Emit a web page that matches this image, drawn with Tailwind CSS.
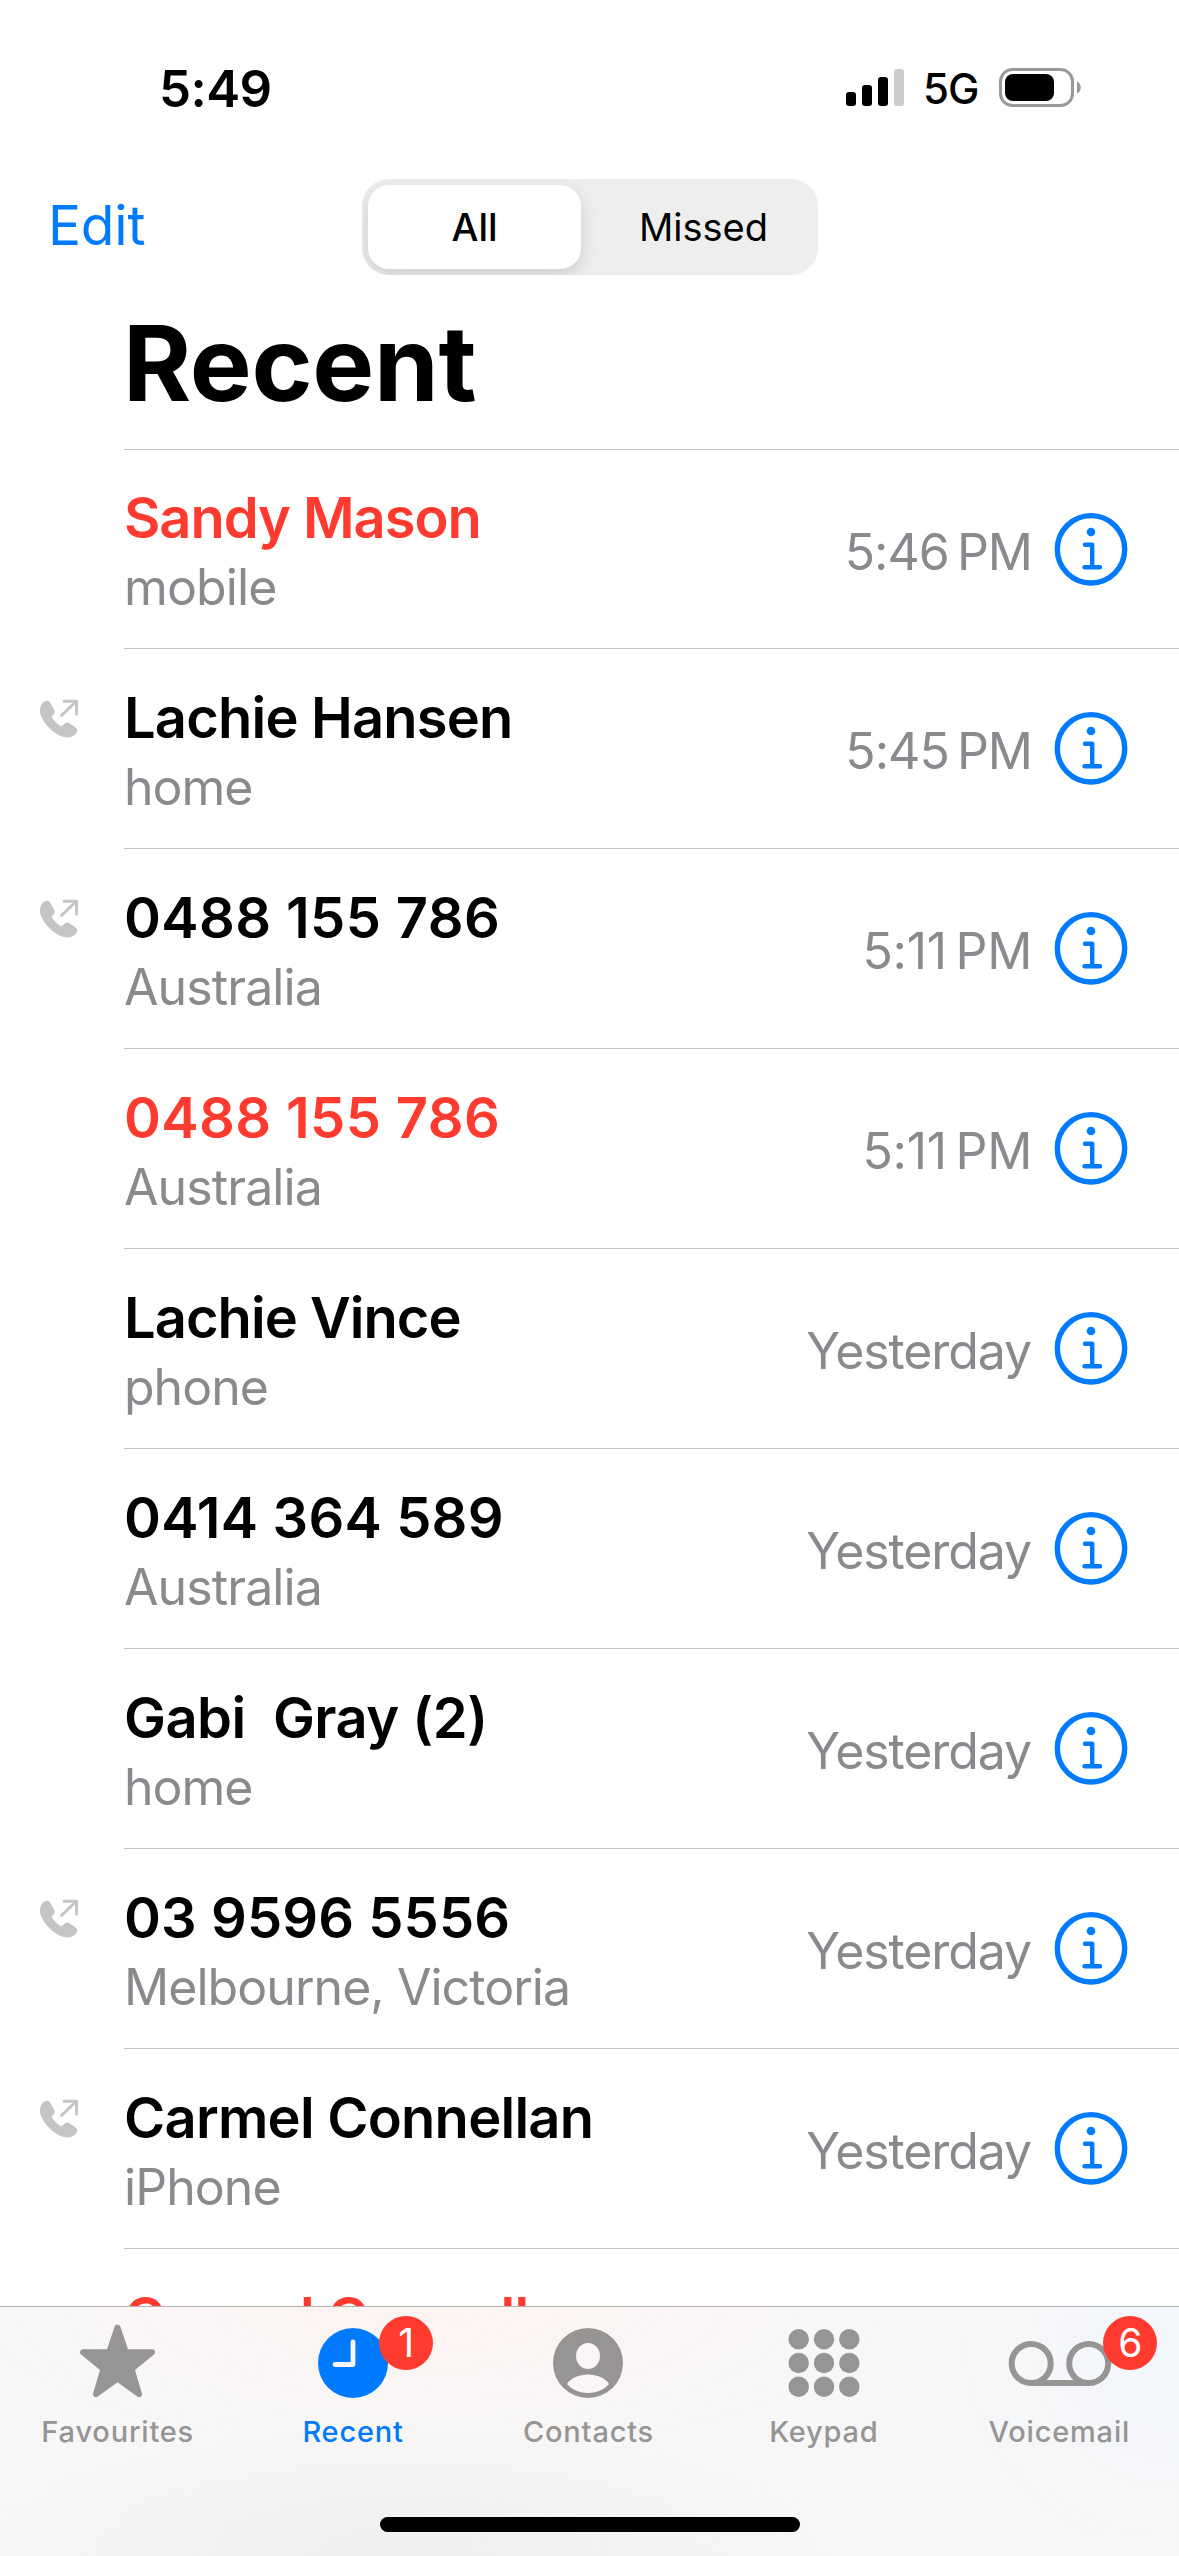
<!DOCTYPE html>
<html lang="en">
<head>
    <meta charset="utf-8">
    <title>Recent</title>
    <script src="https://cdn.jsdelivr.net/npm/@tailwindcss/browser@4"></script>
</head>
<body class="bg-white">
    <div class="relative flex h-[2556px] w-[1179px] flex-col overflow-hidden bg-white font-[Inter,sans-serif] text-black">
        <!-- status bar -->
        <div class="flex h-[176px] shrink-0 items-start justify-between pl-[159px] pr-[98px]">
            <span class="mt-[57px] text-[51px] leading-[64px] font-semibold tracking-[-0.6px]">5:49</span>
            <div class="mt-[66px] flex h-[44px] items-center">
                <svg class="h-[44px] w-[58px]" viewBox="0 0 58 44">
                    <rect x="0" y="26" width="10" height="14" rx="3"/>
                    <rect x="16" y="19" width="10" height="21" rx="3"/>
                    <rect x="32" y="11" width="10" height="29" rx="3"/>
                    <rect x="48" y="3" width="10" height="37" rx="3" fill="#ccc"/>
                </svg>
                <span class="ml-[19px] w-[76px] pt-[2px] text-[42px] leading-[44px] font-medium tracking-[-1px]">5G</span>
                <svg class="h-[44px] w-[82px]" viewBox="0 0 82 44">
                    <rect x="1.5" y="3.5" width="72" height="36" rx="12" fill="none" stroke="#999" stroke-width="3"/>
                    <rect x="6" y="8" width="49" height="27" rx="8"/>
                    <path d="M78 15.500c5 2 5 10 0 12z" fill="#999"/>
                </svg>
            </div>
        </div>

        <!-- nav -->
        <div class="grid h-[102px] shrink-0 grid-cols-[362px_456px_361px] items-start">
            <a class="pl-[48px] pt-[15px] text-[55px] leading-[68px] tracking-[-0.2px] text-[#007aff]">Edit</a>
            <div class="mt-[3px] flex h-[96px] overflow-hidden rounded-[27px] bg-[#eee] p-[6px] text-[38px] leading-[84px]">
                <div class="w-[213px] rounded-[21px] bg-white text-center font-medium shadow-[0_6px_18px_rgba(0,0,0,0.14)]">All</div>
                <div class="flex-1 pl-[14px] text-center">Missed</div>
            </div>
        </div>

        <h1 class="h-[171px] shrink-0 pl-[123px] pt-[22px] text-[104px] leading-[126px] font-bold tracking-[-0.3px]">Recent</h1>

        <div id="calls"></div>

        <!-- tab bar -->
        <div class="absolute inset-x-0 bottom-0 h-[250px] border-t border-[#b2b2b2] bg-[#f7f7f7]">
            <div class="h-full bg-[radial-gradient(ellipse_480px_150px_at_430px_0px,#fdf4f2,transparent),radial-gradient(ellipse_260px_250px_at_1179px_40px,#f2f6fb,transparent),radial-gradient(ellipse_450px_130px_at_400px_249px,#efefef,transparent)]">
                <div id="tabs" class="grid h-[210px] grid-cols-5 pr-[2px]"></div>
                <div class="mx-auto h-[15px] w-[420px] rounded-full bg-black"></div>
            </div>
        </div>
    </div>

    <script>
        // name, label, time, missed, outgoing, letter spacing of each of the three texts
        const calls = [
            ['Sandy Mason', 'mobile', '5:46\u2009PM', true, false, -1.05, -0.85, -1],
            ['Lachie Hansen', 'home', '5:45\u2009PM', false, true, -0.8, -1, -1],
            ['0488 155 786', 'Australia', '5:11\u2009PM', false, true, 0.4, -0.9, -0.3],
            ['0488 155 786', 'Australia', '5:11\u2009PM', true, false, 0.4, -0.9, -0.3],
            ['Lachie Vince', 'phone', 'Yesterday', false, false, -0.95, -1, -1.1],
            ['0414 364 589', 'Australia', 'Yesterday', false, false, 0.2, -0.9, -1.1],
            ['Gabi  Gray (2)', 'home', 'Yesterday', false, false, -0.5, -1, -1.1],
            ['03 9596 5556', 'Melbourne, Victoria', 'Yesterday', false, true, 0.1, -0.95, -1.1],
            ['Carmel Connellan', 'iPhone', 'Yesterday', false, true, -0.75, -0.95, -1.1],
            ['Carmel Connellan', '', '', true, false, -0.75, 0, 0],
        ];

        const outgoingIcon = `
            <svg class="mt-[51px] ml-[39px] h-[42px] w-[42px]" viewBox="0 0 42 42" fill="#c5c5c7">
                <path d="M6.500 2C3.500 3 1 7 1 11.500C1 23 17 38.500 28.500 38.500C33 38.500 36.500 36 38 33C38.800 31 38 29.500 36 28L30.500 24.300C28.500 23.200 27 23.300 25.500 24.800L23.500 26.500C22.500 27.300 21.500 27 20 26C17.500 24.300 15 21.500 13.500 19.500C12.800 18.500 12.800 17.500 13.500 16.800L15 15C16 13.500 16 12 15 10.300L11.500 4C10 1.800 8.500 1.300 6.500 2Z"/>
                <path d="M22.500 16.500L37 2.500M25 2.200H37.500V15" fill="none" stroke="#c5c5c7" stroke-width="3" stroke-linecap="round" stroke-linejoin="round"/>
            </svg>`;

        document.getElementById('calls').innerHTML = calls
            .map(([name, label, time, missed, outgoing, t1, t2, t3], i) => `
                <div class="flex ${i === 0 ? 'h-[199px]' : 'h-[200px]'}">
                    <div class="w-[124px] shrink-0">${outgoing ? outgoingIcon : ''}</div>
                    <div class="flex flex-1 border-t border-[#c6c6c8] pr-[51px]">
                        <div class="flex-1 ${i === 0 ? 'pt-[32px]' : 'pt-[33px]'}">
                            <div class="text-[56px] leading-[72px] font-semibold whitespace-pre ${missed ? 'text-[#ff3b30]' : 'text-black'}" style="letter-spacing:${t1}px">${name}</div>
                            <div class="text-[50px] leading-[66px] whitespace-pre text-[#8a8a8e]" style="letter-spacing:${t2}px">${label}</div>
                        </div>
                        <div class="pt-[70px] text-[50px] leading-[64px] whitespace-pre text-[#8a8a8e] ${time === 'Yesterday' ? 'pr-px' : ''}" style="letter-spacing:${t3}px">${time}</div>
                        <svg class="mt-[62px] ml-[22px] h-[74px] w-[74px]" viewBox="0 0 74 74" fill="none" stroke="#007aff" stroke-linecap="round" stroke-linejoin="round">
                            <circle cx="37" cy="37.300" r="33.700" stroke-width="5.400"/>
                            <circle cx="37" cy="20" r="4.300" fill="#007aff" stroke="none"/>
                            <path d="M31 32.800H38.200V55.300M30.500 55.300H46" stroke-width="4.400"/>
                        </svg>
                    </div>
                </div>`)
            .join('');

        const tabs = [
            ['Favourites', '', `<path d="M38.500 3.500L46.800 28.300H73L52.600 45L60 70L38.500 54.500L17 70L24.400 45L4 28.300H30.200Z" stroke="currentColor" stroke-width="6" stroke-linejoin="round"/>`],
            ['Recent', '1', `<circle cx="39" cy="39" r="35"/><path d="M39 18V40.500H21" fill="none" stroke="#f9f5f5" stroke-width="4.800" stroke-linecap="round" stroke-linejoin="round"/>`],
            ['Contacts', '', `<circle cx="39" cy="39" r="35"/><ellipse cx="39" cy="32" rx="12" ry="13" fill="#f9f6f5"/><path d="M18 60C22 54 30 50.500 39 50.500S56 54 60 60C55 66 47 69 39 69S23 66 18 60Z" fill="#f9f6f5"/>`],
            ['Keypad', '', [15.2, 39, 62.8].map(y => [13.7, 39, 64.3].map(x => `<circle cx="${x}" cy="${y}" r="10.200"/>`).join('')).join('')],
            ['Voicemail', '6', `<g fill="none" stroke="currentColor" stroke-width="6"><circle cx="11.200" cy="39.500" r="19.500"/><circle cx="68.700" cy="39.500" r="19.500"/><path d="M11 59H69"/></g>`],
        ];
        document.getElementById('tabs').innerHTML = tabs
            .map(([name, badge, icon]) => `
                <div class="flex flex-col items-center ${name === 'Recent' ? 'text-[#007aff]' : 'text-[#979594]'}">
                    <div class="relative mt-[17px] h-[78px] w-[78px]">
                        <svg class="h-[78px] w-[78px] overflow-visible" viewBox="0 0 78 78" fill="currentColor">${icon}</svg>
                        ${badge ? `<span class="absolute top-[-8px] ${badge === '1' ? 'left-[65px]' : 'left-[83px]'} h-[54px] w-[54px] rounded-full bg-[#ff3b30] text-center text-[39px] leading-[54px] text-white">${badge}</span>` : ''}
                    </div>
                    <div class="mt-[11px] text-[29px] leading-[38px] font-medium tracking-[0.8px]">${name}</div>
                </div>`)
            .join('');
    </script>
</body>
</html>
